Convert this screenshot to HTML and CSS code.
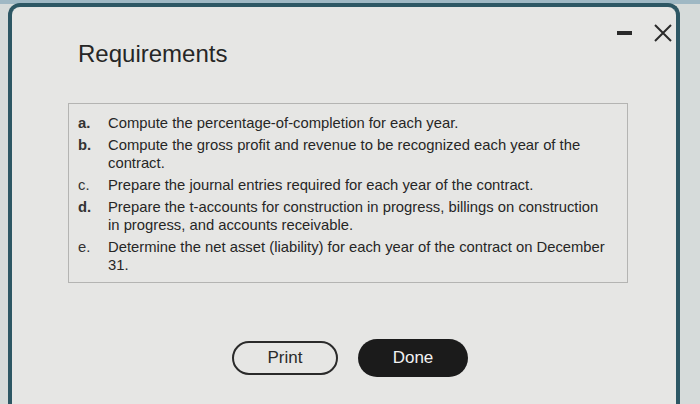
FILE: index.html
```html
<!DOCTYPE html>
<html>
<head>
<meta charset="utf-8">
<link rel="stylesheet" href="styles.css">
</head>
<body>
<div class="screen">
  <div class="dialog">
    <div class="header">
      <h1 class="title">Requirements</h1>
      <div class="controls">
        <span class="minimize"></span>
        <svg class="close" width="18" height="18" viewBox="0 0 18 18"><path d="M1 1 L17 17 M17 1 L1 17" stroke="#2a2a2a" stroke-width="2" fill="none"/></svg>
      </div>
    </div>
    <div class="box">
      <ol class="reqs">
        <li><span class="lbl">a.</span><span class="txt">Compute the percentage-of-completion for each year.</span></li>
        <li><span class="lbl">b.</span><span class="txt">Compute the gross profit and revenue to be recognized each year of the contract.</span></li>
        <li><span class="lbl light">c.</span><span class="txt">Prepare the journal entries required for each year of the contract.</span></li>
        <li><span class="lbl">d.</span><span class="txt">Prepare the t-accounts for construction in progress, billings on construction in progress, and accounts receivable.</span></li>
        <li><span class="lbl light">e.</span><span class="txt">Determine the net asset (liability) for each year of the contract on December 31.</span></li>
      </ol>
    </div>
    <div class="actions">
      <button class="btn print">Print</button>
      <button class="btn done">Done</button>
    </div>
  </div>
</div>
</body>
</html>
```
FILE: styles.css
```css
html, body {
  margin: 0;
  padding: 0;
}
body {
  width: 700px;
  height: 404px;
  overflow: hidden;
  background: #d6dbda;
  font-family: "Liberation Sans", Arial, sans-serif;
  color: #2a2a2a;
}
.screen {
  padding-top: 3px;
  padding-left: 8px;
  background: linear-gradient(#9fb8c4 0, #9fb8c4 4px, #d6dbda 4px);
}
.dialog {
  width: 672px;
  height: 420px;
  background: #e6e6e4;
  border: 4px solid #2d5764;
  border-bottom: none;
  border-radius: 12px 12px 0 0;
  box-sizing: border-box;
  padding: 0 0 0 56px;
}
.header {
  display: flex;
  justify-content: space-between;
  align-items: flex-start;
  padding-left: 10px;
  padding-right: 4px;
}
.title {
  margin: 32px 0 0 0;
  font-size: 24px;
  font-weight: normal;
  line-height: 30px;
  color: #262626;
}
.controls {
  display: flex;
  align-items: center;
  gap: 22px;
  margin-top: 17px;
}
.minimize {
  width: 15px;
  height: 4px;
  background: #2a2a2a;
  display: block;
}
.close {
  display: block;
}
.box {
  margin-top: 34px;
  width: 560px;
  height: 180px;
  box-sizing: border-box;
  border: 1px solid #b4b4b2;
  padding: 10px 0 0 9px;
}
.reqs {
  list-style: none;
  margin: 0;
  padding: 0;
  font-size: 14.8px;
  line-height: 18px;
  color: #262626;
}
.reqs li {
  display: flex;
  margin-bottom: 4px;
}
.lbl {
  width: 30px;
  flex: none;
  font-weight: bold;
  color: #333;
}
.lbl.light {
  font-weight: normal;
}
.txt {
  width: 505px;
}
.actions {
  display: flex;
  gap: 20px;
  margin-top: 56px;
  margin-left: 164px;
  align-items: center;
}
.btn {
  font-family: "Liberation Sans", Arial, sans-serif;
  font-size: 17px;
  border-radius: 20px;
  cursor: pointer;
}
.print {
  width: 106px;
  height: 34px;
  background: transparent;
  border: 2px solid #2a2a2a;
  color: #2a2a2a;
}
.done {
  width: 110px;
  height: 38px;
  background: #1b1b1b;
  border: none;
  color: #f2f2f2;
}
```
